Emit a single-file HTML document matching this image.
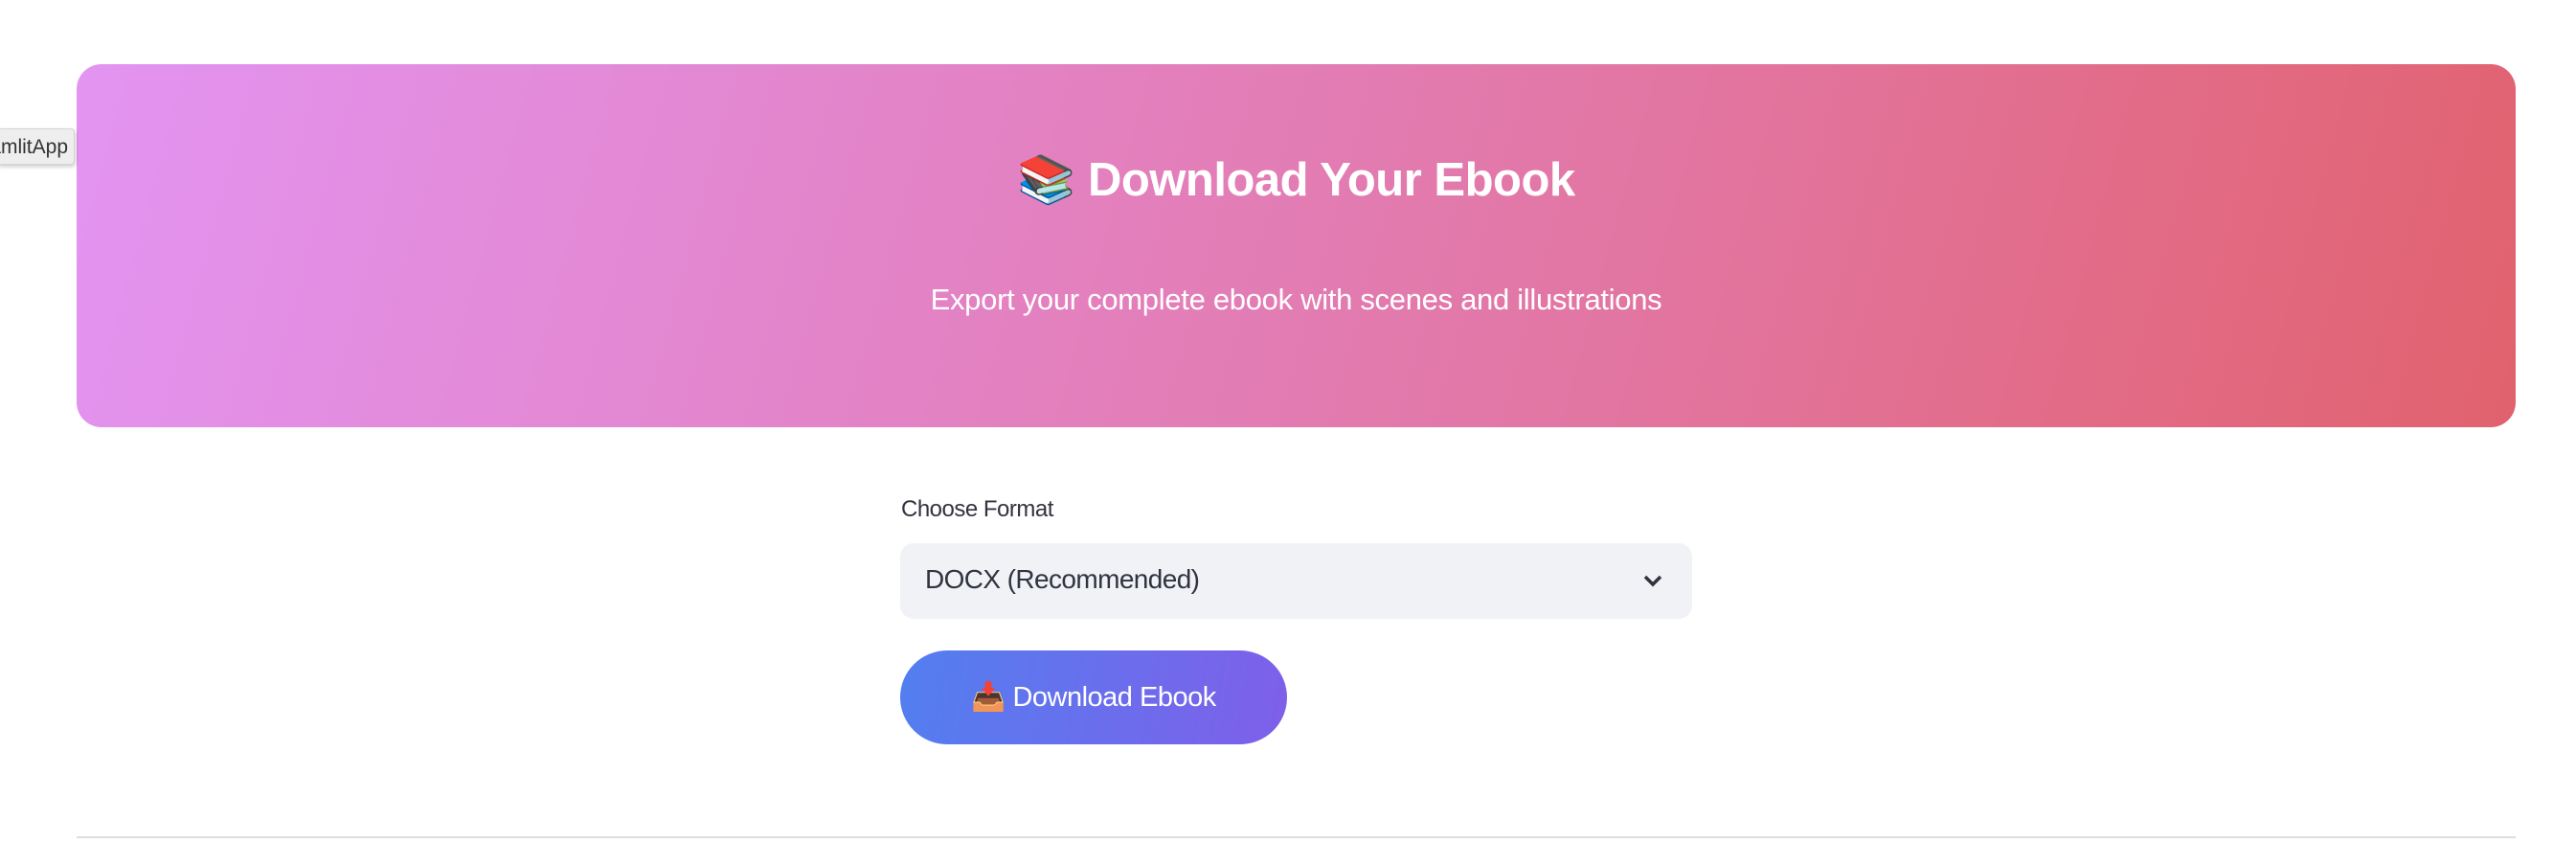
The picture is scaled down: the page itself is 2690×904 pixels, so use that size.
<!DOCTYPE html>
<html><head><meta charset="utf-8"><style>
body{margin:0;width:2690px;height:904px;background:#fff;font-family:"Liberation Sans",sans-serif;position:relative;overflow:hidden}
.hero{position:absolute;left:80px;top:67px;width:2547px;height:379px;border-radius:26px;background:linear-gradient(105deg,#e394f2 0%,#e383c6 35%,#e275a0 65%,#e1626e 100%)}
.t{position:absolute;left:0;right:0;top:92px;text-align:center;color:#fff;font-weight:bold;font-size:49px;letter-spacing:-0.5px}
.s{position:absolute;left:0;right:0;top:228px;text-align:center;color:#fff;font-size:31px;letter-spacing:-0.3px}
.tip{position:absolute;left:-4px;top:134px;width:82px;height:38px;background:#eee;border:1px solid #d4d4d4;border-radius:4px;box-shadow:1px 2px 4px rgba(0,0,0,.2);font-size:21px;line-height:38px;color:#333;text-align:right;padding-right:6px;box-sizing:border-box;overflow:hidden;white-space:nowrap;direction:rtl}
.lbl{position:absolute;left:941px;top:518px;font-size:24px;color:#31333f;letter-spacing:-0.5px}
.sel{position:absolute;left:940px;top:567px;width:827px;height:79px;background:#f0f2f6;border-radius:14px}
.sel span{position:absolute;left:26px;top:22px;font-size:28px;color:#31333f;letter-spacing:-0.6px}
.btn{position:absolute;left:940px;top:679px;width:404px;height:98px;border-radius:49px;background:linear-gradient(100deg,#527ff0,#7f5fe9);color:#fff;font-size:29px;line-height:98px;text-align:center;letter-spacing:-0.5px}
.hr{position:absolute;left:80px;top:873px;width:2547px;height:2px;background:#dedede}
</style></head><body>
<div class="hero">
<div class="t">📚 Download Your Ebook</div>
<div class="s">Export your complete ebook with scenes and illustrations</div>
</div>
<div class="tip">StreamlitApp</div>
<div class="lbl">Choose Format</div>
<div class="sel"><span>DOCX (Recommended)</span>
<svg style="position:absolute;right:30px;top:30px" width="22" height="18" viewBox="0 0 22 18"><path d="M3 5l8 8 8-8" fill="none" stroke="#31333f" stroke-width="3.5"/></svg></div>
<div class="btn">📥 Download Ebook</div>
<div class="hr"></div>
</body></html>
